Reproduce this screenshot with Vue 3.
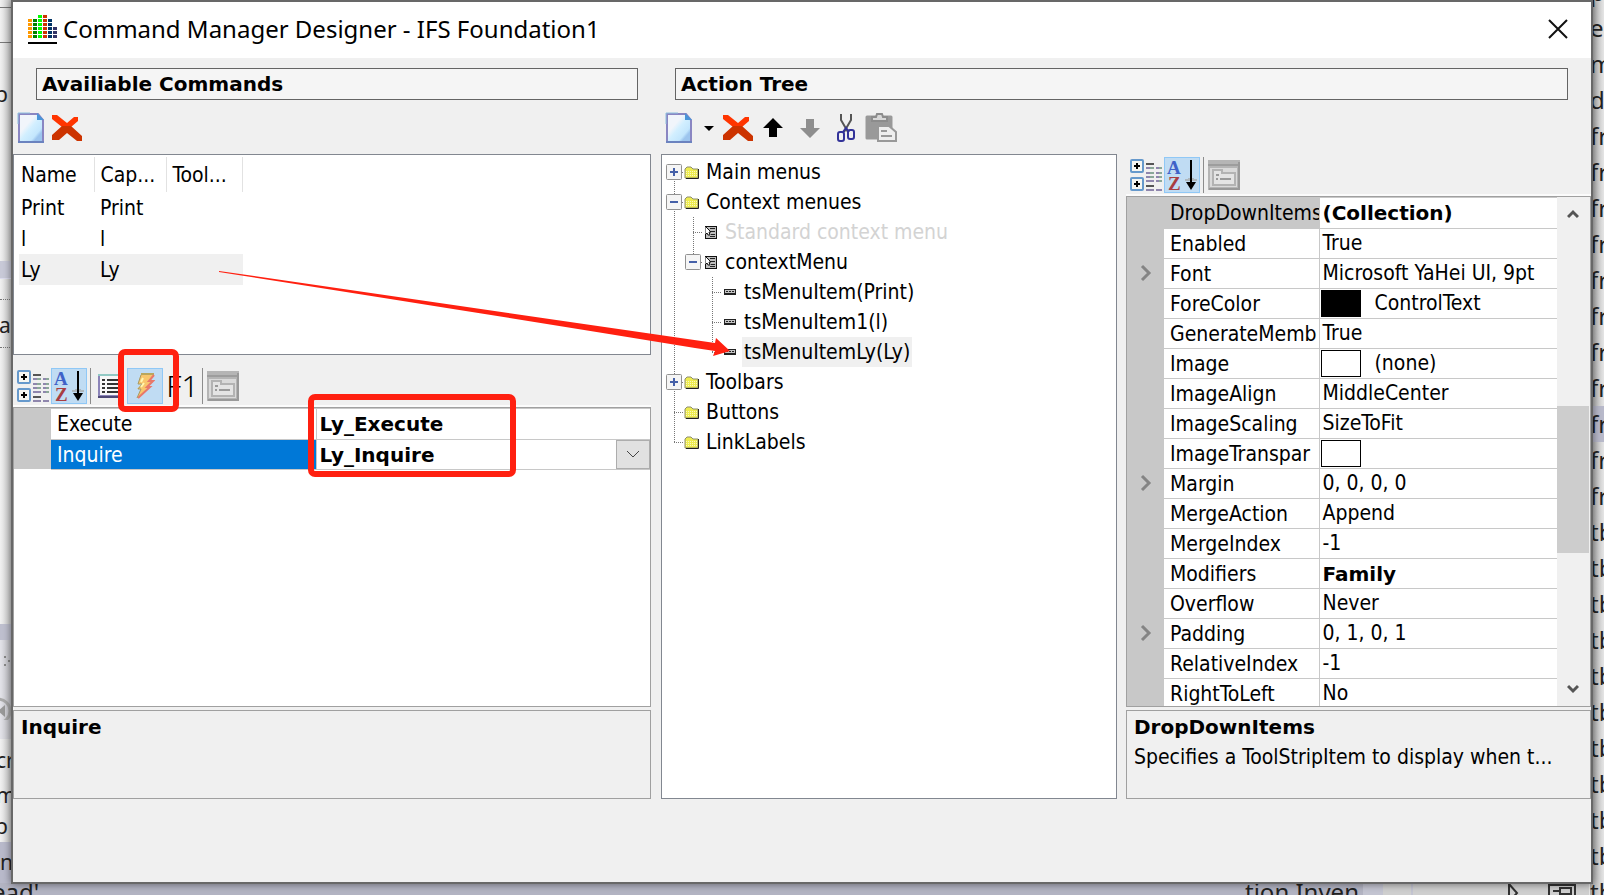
<script setup>
const bars = [
  { n: 5, c: '#ff9900' },
  { n: 5, c: '#008000' },
  { n: 6, c: '#00ff00' },
  { n: 6, c: '#cc3300' },
  { n: 5, c: '#003366' },
  { n: 3, c: '#333366' },
]
const commands = [
  { name: 'Print', caption: 'Print' },
  { name: 'l', caption: 'l' },
  { name: 'Ly', caption: 'Ly', selected: true },
]
const events = [
  { name: 'Execute', value: 'Ly_Execute' },
  { name: 'Inquire', value: 'Ly_Inquire', selected: true },
]
const tree = [
  { guides: ['plus first'], icon: 'folder', label: 'Main menus' },
  { guides: ['minus'], icon: 'folder', label: 'Context menues' },
  { guides: ['line', 'tee'], icon: 'menu', label: 'Standard context menu', dim: true },
  { guides: ['line', 'minus last'], icon: 'menu', label: 'contextMenu' },
  { guides: ['line', 'none', 'tee'], icon: 'item', label: 'tsMenuItem(Print)' },
  { guides: ['line', 'none', 'tee'], icon: 'item', label: 'tsMenuItem1(l)' },
  { guides: ['line', 'none', 'end'], icon: 'item', label: 'tsMenuItemLy(Ly)', selected: true },
  { guides: ['plus'], icon: 'folder', label: 'Toolbars' },
  { guides: ['tee'], icon: 'folder', label: 'Buttons' },
  { guides: ['end'], icon: 'folder', label: 'LinkLabels' },
]
const props = [
  { name: 'DropDownItems', value: '(Collection)', bold: true, selected: true },
  { name: 'Enabled', value: 'True' },
  { name: 'Font', value: 'Microsoft YaHei UI, 9pt', expand: true },
  { name: 'ForeColor', value: 'ControlText', swatch: 'black' },
  { name: 'GenerateMemb', value: 'True' },
  { name: 'Image', value: '(none)', swatch: 'white' },
  { name: 'ImageAlign', value: 'MiddleCenter' },
  { name: 'ImageScaling', value: 'SizeToFit' },
  { name: 'ImageTranspar', value: '', swatch: 'white' },
  { name: 'Margin', value: '0, 0, 0, 0', expand: true },
  { name: 'MergeAction', value: 'Append' },
  { name: 'MergeIndex', value: '-1' },
  { name: 'Modifiers', value: 'Family', bold: true },
  { name: 'Overflow', value: 'Never' },
  { name: 'Padding', value: '0, 1, 0, 1', expand: true },
  { name: 'RelativeIndex', value: '-1' },
  { name: 'RightToLeft', value: 'No' },
]
const fileRows = ['p', 'e', 'm', 'd', ...Array(11).fill('fr'), ...Array(11).fill('tb')]
const hasTop = (g) => !g.includes('first') && g !== 'none'
const hasBottom = (g) => !g.includes('last') && g !== 'none' && g !== 'end'
const hasBranch = (g) => g !== 'line' && g !== 'none'
</script>

<template>
  <div class="desktop">
    <svg class="symbols" aria-hidden="true">
      <linearGradient id="paper" x1="0" y1="0" x2="1" y2="1">
        <stop offset="0.35" stop-color="#f1f5fb" />
        <stop offset="0.5" stop-color="#d2efff" />
        <stop offset="0.72" stop-color="#c3e6fd" />
        <stop offset="0.8" stop-color="#9dc5ee" />
      </linearGradient>
      <symbol id="i-new" viewBox="0 0 28 32">
        <path d="M2 2h19l5 6v22H2z" fill="url(#paper)" stroke="#8a86c2" stroke-width="2" />
        <path d="M1 12V1h12" fill="none" stroke="#8fc0df" stroke-width="1" />
        <path d="M20 1l7 7h-7z" fill="#4a94d8" />
        <path d="M1 30h26" stroke="#6b83bf" stroke-width="2" />
      </symbol>
      <symbol id="i-delete" viewBox="0 0 32 30">
        <path d="M1 2h5l10 8 7-6h4v4l-7 6h-9L1 6z" fill="#ff3500" />
        <path d="M11 13h9l11 10v5h-5l-10-8-8 7H1v-5z" fill="#cc3300" />
      </symbol>
      <symbol id="i-up" viewBox="0 0 20 20">
        <path d="M10 0l10 10h-6v9H6v-9H0z" />
      </symbol>
      <symbol id="i-cat" viewBox="0 0 32 32">
        <g v-for="y in [0, 18]" :key="y">
          <rect x="1" :y="y + 1" width="12" height="12" rx="1" fill="#f6f6f2" stroke="#6699cc" stroke-width="2" />
          <path :d="`M4 ${y + 7}h6M7 ${y + 4}v6`" stroke="#000" stroke-width="2" />
        </g>
        <path d="M16 5h8M16 27h8" stroke="#555" stroke-width="2" />
        <path d="M16 9h8M16 14h8M16 18h8M16 22h8M26 9h6M26 14h6M26 18h6M26 22h6M16 31h8M26 31h6" stroke="#8f86ad" stroke-width="2" />
        <path d="M20 9h4M20 14h4M20 18h4M29 9h3M29 14h3M29 18h3M29 22h3" stroke="#8aa898" stroke-width="2" />
      </symbol>
      <symbol id="i-az" viewBox="0 0 34 34">
        <text x="2" y="16" class="az-a">A</text>
        <text x="3" y="32" class="az-z">Z</text>
        <path d="M26 2v27" stroke="#000" stroke-width="2" />
        <path d="M20 22h4v-2M32 22h-4v-2" stroke="#aeb7bd" stroke-width="2" fill="none" />
        <path d="M21 24h10l-5 8z" fill="#000" />
      </symbol>
      <symbol id="i-page" viewBox="0 0 32 30">
        <path d="M0 0h32v30H0z" fill="#b5b5b5" />
        <path d="M0 5h32" stroke="#9d9d9d" stroke-width="2" />
        <path d="M2 8h27v19H2z" fill="#dadada" />
        <path d="M5 12V10h9v3h13v12H5z" fill="#e4e4e4" stroke="#b3b3b3" stroke-width="2" />
        <path d="M8 15h3M8 19h2M12 19h11" stroke="#9a9a9a" stroke-width="2" />
        <path d="M1 29h30V2" fill="none" stroke="#999" stroke-width="2" />
      </symbol>
      <symbol id="i-folder" viewBox="0 0 16 13">
        <path d="M1 3l2-2h4l2 2h5v9H1z" fill="#eeec50" stroke="#8d8d6e" />
        <path d="M2 5.500h11M2 7.500h11M2 9.500h11" stroke="#fbfac0" stroke-dasharray="1 1" />
        <path d="M14.500 3v9.500H2" fill="none" stroke="#222" stroke-width="1" />
      </symbol>
      <symbol id="i-menu" viewBox="0 0 12 13">
        <path d="M0 0h12v13H0z" fill="#111" />
        <path d="M1 1h10v11H1z" fill="#bdbdbd" />
        <path d="M5 2.500h5M6 5.500h4M6 8.500h4M5 10.500h5" stroke="#222" />
        <path d="M0 0l6 6H4l1 3H3L2 7 0 9z" fill="#fff" stroke="#111" stroke-width="1" />
      </symbol>
      <symbol id="i-item" viewBox="0 0 12 6">
        <path d="M0 0h12v6H0z" fill="#222" />
        <path d="M1 1h10v3H1z" fill="#c4c4c4" />
        <path d="M2 2.500h8" stroke="#222" stroke-dasharray="2 1" />
      </symbol>
      <symbol id="i-chevron" viewBox="0 0 12 18">
        <path d="M2 2l7 7-7 7" fill="none" stroke="#848484" stroke-width="3" />
      </symbol>
    </svg>

    <div class="backdrop" aria-hidden="true">
      <div class="editor-left">
        <div class="strip s1"></div>
        <div class="strip s2"></div>
        <div class="strip s3">p</div>
        <div class="strip s4"></div>
        <div class="strip s5"></div>
        <div class="strip s6"></div>
        <div class="strip s7">ar</div>
        <div class="strip s8"></div>
        <div class="strip s9"></div>
        <div class="strip s10">
          <svg width="14" height="80" viewBox="0 0 14 80">
            <path d="M4 16h2v2H4zM4 24h2v2H4zM8 20h2v2H8zM12 16h2v2h-2zM12 24h2v2h-2z" fill="#888" />
            <circle cx="-2" cy="71" r="12" fill="none" stroke="#aaa" stroke-width="3" />
            <path d="M-2 71l7-6v12z" fill="#999" />
          </svg>
        </div>
        <div class="strip s11">cr</div>
        <div class="strip s12">m</div>
        <div class="strip s13">p</div>
        <div class="strip s14">n</div>
      </div>
      <div class="editor-right">
        <div v-for="(t, i) in fileRows" :key="i" class="file" :class="{ on: i === 12 }">{{ t }}</div>
      </div>
      <div class="editor-bottom">
        <span class="code">ead'</span>
        <span class="code tail">tion Inven</span>
        <span class="ruler"></span>
        <span class="outline">
          <svg width="12" height="20" viewBox="0 0 12 20"><path d="M2 1l8 9-8 9z" fill="none" stroke="#333" stroke-width="2" /></svg>
          <svg width="28" height="20" viewBox="0 0 28 20"><path d="M1 20V2h26v18M5 8h6M12 5h11v6H12zM5 15h18" fill="none" stroke="#333" stroke-width="2" /></svg>
        </span>
      </div>
    </div>

    <section class="dialog" role="dialog" aria-labelledby="dlg-title">
      <header class="titlebar">
        <svg class="logo" width="29" height="29" viewBox="0 0 29 29">
          <template v-for="(b, i) in bars" :key="i">
            <rect v-for="k in b.n" :key="k" :x="i * 5" :y="24 - k * 4" width="4" height="3" :fill="b.c" />
          </template>
          <path d="M0 28h29" stroke="#000" stroke-width="2" />
        </svg>
        <h1 id="dlg-title">Command Manager Designer - IFS Foundation1</h1>
        <button class="close" type="button" aria-label="Close">
          <svg width="20" height="20" viewBox="0 0 20 20"><path d="M1 1l18 18M19 1L1 19" stroke="#111" stroke-width="2" /></svg>
        </button>
      </header>

      <main class="body">
        <div class="col-left">
          <h2 class="head">Availiable Commands</h2>
          <div class="tools" role="toolbar">
            <button type="button" aria-label="New command"><svg width="28" height="32"><use href="#i-new" /></svg></button>
            <button type="button" aria-label="Delete command"><svg width="32" height="30"><use href="#i-delete" /></svg></button>
          </div>

          <div class="list">
            <table>
              <thead>
                <tr><th class="c1">Name</th><th class="c2">Cap...</th><th class="c3">Tool...</th></tr>
              </thead>
              <tbody>
                <tr v-for="c in commands" :key="c.name" :class="{ sel: c.selected }">
                  <td>{{ c.name }}</td><td>{{ c.caption }}</td><td></td>
                </tr>
              </tbody>
            </table>
          </div>

          <div class="ptools events" role="toolbar">
            <button type="button" aria-label="Categorized"><svg width="32" height="32"><use href="#i-cat" /></svg></button>
            <button type="button" class="on" aria-label="Alphabetical"><svg width="34" height="34"><use href="#i-az" /></svg></button>
            <i class="sep"></i>
            <button type="button" class="props-btn" aria-label="Properties">
              <svg width="26" height="24" viewBox="0 0 26 24">
                <path d="M1 1h24v21H1z" fill="#f7f7f7" stroke="#8b84b8" stroke-width="2" />
                <path d="M0 1h25" stroke="#92c9c4" stroke-width="2" />
                <path d="M0 23h26" stroke="#4d4877" stroke-width="2" />
                <path d="M4 6h3M4 10h3M4 14h3M4 18h3M9 6h13M9 10h13M9 14h13M9 18h13" stroke="#333" stroke-width="2" />
              </svg>
            </button>
            <button type="button" class="on bolt" aria-label="Events">
              <svg width="20" height="26" viewBox="0 0 20 26">
                <path d="M6 1h13l-5 7h4l-6 6h3L2 25l4-9H2l5-5H3z" fill="#f8c66c" />
                <path d="M6 1h13" stroke="#b9a65c" stroke-width="2" />
                <path d="M19 2l-5 6h4l-6 6h3L3 25" fill="none" stroke="#e8786a" stroke-width="2" />
                <path d="M6 2L3 11h4l-4 5h3L2 25" fill="none" stroke="#a89a62" stroke-width="1" />
                <path d="M8 5l-2 4M9 10l-3 4" stroke="#fff6b0" stroke-width="2" />
              </svg>
              <span class="mark"></span>
            </button>
            <button type="button" class="f1">F1</button>
            <i class="sep"></i>
            <button type="button" class="pages" aria-label="Property pages"><svg width="32" height="30"><use href="#i-page" /></svg></button>
          </div>

          <div class="pgrid">
            <div class="pscroll">
              <table>
                <colgroup><col class="g" /><col class="ne" /><col /></colgroup>
                <tbody>
                  <tr v-for="e in events" :key="e.name" :class="{ chosen: e.selected }">
                    <td class="gut"></td>
                    <th scope="row">{{ e.name }}</th>
                    <td class="val">
                      <div class="cell">
                        <span class="bold">{{ e.value }}</span>
                        <button v-if="e.selected" type="button" class="drop" aria-label="Choose handler">
                          <svg width="14" height="8" viewBox="0 0 14 8"><path d="M1 1l6 6 6-6" fill="none" stroke="#444" /></svg>
                        </button>
                      </div>
                    </td>
                  </tr>
                </tbody>
              </table>
            </div>
            <span class="mark values"></span>
          </div>
          <div class="desc"><strong class="bold">Inquire</strong></div>
        </div>

        <div class="col-right">
          <h2 class="head">Action Tree</h2>
          <div class="tools" role="toolbar">
            <button type="button" aria-label="New item"><svg width="28" height="32"><use href="#i-new" /></svg></button>
            <button type="button" class="more" aria-label="More"><svg width="10" height="5" viewBox="0 0 10 5"><path d="M0 0h10L5 5z" /></svg></button>
            <button type="button" aria-label="Delete item"><svg width="32" height="30"><use href="#i-delete" /></svg></button>
            <button type="button" class="up" aria-label="Move up"><svg width="20" height="20"><use href="#i-up" /></svg></button>
            <button type="button" class="down" aria-label="Move down"><svg width="20" height="20"><use href="#i-up" /></svg></button>
            <button type="button" class="cut" aria-label="Cut">
              <svg width="20" height="30" viewBox="0 0 20 30">
                <path d="M5 1v6l7 12M15 1v6L8 19" fill="none" stroke="#555" stroke-width="2" />
                <path d="M7 19l3-4 3 4" fill="none" stroke="#333399" stroke-width="2" />
                <rect x="2" y="19" width="6" height="9" rx="2" fill="none" stroke="#333399" stroke-width="2" />
                <rect x="12" y="17" width="6" height="9" rx="2" fill="none" stroke="#333399" stroke-width="2" />
              </svg>
            </button>
            <button type="button" aria-label="Paste">
              <svg width="32" height="30" viewBox="0 0 32 30">
                <path d="M2 4h24v21H2z" fill="#999" stroke="#999" stroke-width="3" stroke-linejoin="round" />
                <path d="M7 8V4h4l1-3h5l1 3h4v4z" fill="#d8d8d8" stroke="#8c8c8c" stroke-width="2" />
                <path d="M13 13h11l7 6v9H13z" fill="#eee" stroke="#999" stroke-width="2" />
                <path d="M16 18h6M16 23h11" stroke="#999" stroke-width="2" />
              </svg>
            </button>
          </div>

          <div class="panes">
            <ul class="tree" role="tree">
              <li v-for="n in tree" :key="n.label" role="treeitem" :class="{ dim: n.dim, sel: n.selected }">
                <svg v-for="(g, i) in n.guides" :key="i" class="guide" width="19" height="30" viewBox="0 0 19 30">
                  <g stroke="#777" stroke-dasharray="1 1">
                    <path v-if="hasTop(g)" d="M9.500 0V15" />
                    <path v-if="hasBottom(g)" d="M9.500 16V30" />
                    <path v-if="hasBranch(g)" d="M9 15.500H19" />
                  </g>
                  <g v-if="g.includes('plus') || g.includes('minus')">
                    <rect x="1.500" y="7.500" width="15" height="15" rx="1" fill="#f5f5f5" stroke="#919191" />
                    <path d="M5 15h8" stroke="#4560a8" stroke-width="2" />
                    <path v-if="g.includes('plus')" d="M9 11v8" stroke="#4560a8" stroke-width="2" />
                  </g>
                </svg>
                <span class="nicon" :class="n.icon">
                  <svg v-if="n.icon === 'folder'" width="16" height="13"><use href="#i-folder" /></svg>
                  <svg v-else-if="n.icon === 'menu'" width="12" height="13"><use href="#i-menu" /></svg>
                  <svg v-else width="12" height="6"><use href="#i-item" /></svg>
                </span>
                <span class="label">{{ n.label }}</span>
              </li>
            </ul>

            <div class="props">
              <div class="ptools" role="toolbar">
                <button type="button" aria-label="Categorized"><svg width="32" height="32"><use href="#i-cat" /></svg></button>
                <button type="button" class="on" aria-label="Alphabetical"><svg width="34" height="34"><use href="#i-az" /></svg></button>
                <i class="sep"></i>
                <button type="button" class="pages" aria-label="Property pages"><svg width="32" height="30"><use href="#i-page" /></svg></button>
              </div>
              <div class="pgrid">
                <div class="pscroll">
                  <table>
                    <colgroup><col class="g" /><col class="np" /><col /></colgroup>
                    <tbody>
                      <tr v-for="p in props" :key="p.name" :class="{ current: p.selected }">
                        <td class="gut"><svg v-if="p.expand" width="12" height="18"><use href="#i-chevron" /></svg></td>
                        <th scope="row">{{ p.name }}</th>
                        <td class="val" :class="{ sw: p.swatch }">
                          <div class="cell"><i v-if="p.swatch" class="swatch" :class="p.swatch"></i><span :class="{ bold: p.bold }">{{ p.value }}</span></div>
                        </td>
                      </tr>
                    </tbody>
                  </table>
                </div>
                <div class="scrollbar">
                  <button type="button" aria-label="Scroll up"><svg width="12" height="10" viewBox="0 0 12 10"><path d="M1 8l5-5 5 5" fill="none" stroke="#555" stroke-width="3" /></svg></button>
                  <span class="space above"></span>
                  <span class="thumb"></span>
                  <span class="space below"></span>
                  <button type="button" aria-label="Scroll down"><svg width="12" height="10" viewBox="0 0 12 10"><path d="M1 2l5 5 5-5" fill="none" stroke="#555" stroke-width="3" /></svg></button>
                </div>
              </div>
              <div class="desc"><strong class="bold">DropDownItems</strong><p>Specifies a ToolStripItem to display when t...</p></div>
            </div>
          </div>
        </div>
      </main>
    </section>

    <svg class="arrow" width="520" height="90" viewBox="0 0 520 90" aria-hidden="true">
      <path d="M1 0L497 72l1-5 14 13-17 5 2-5-20-3Q250 40 1 1z" fill="#ff2010" />
    </svg>
  </div>
</template>

<style>
body { margin: 0; }
.az-a { font: bold 19px "Liberation Serif", serif; fill: #3f62c8; }
.az-z { font: bold 19px "Liberation Serif", serif; fill: #a83d42; }
</style>

<style scoped>
.desktop, .desktop * { box-sizing: border-box; }
.desktop {
  position: relative;
  height: 100vh;
  min-height: 700px;
  padding: 0 11px 11px;
  overflow: hidden;
  background: #e6e6e6;
  color: #000;
  font: 21px/30px "DejaVu Sans Condensed", "DejaVu Sans", sans-serif;
}
.symbols { position: absolute; width: 0; height: 0; }
svg { display: block; flex: none; }
button { display: flex; align-items: center; justify-content: center; padding: 0; border: 0; background: none; font: inherit; color: inherit; }
h1, h2, p, ul { margin: 0; padding: 0; font-weight: normal; }

.backdrop { position: absolute; inset: 0; color: #222; font: 24px/36px "Noto Sans", sans-serif; overflow: hidden; }
.editor-left { position: absolute; left: 0; top: 0; bottom: 0; width: 16px; display: flex; flex-direction: column; background: linear-gradient(90deg, #f2f2f2, #b8b8b8); }
.strip { flex: none; width: 16px; height: 35px; overflow: hidden; white-space: nowrap; }
.s1 { height: 8px; border-bottom: 1px solid #777; }
.s2 { border-bottom: 1px solid #777; }
.s3 { height: 209px; padding-top: 33px; }
.strip.s3, .strip.s13 { text-indent: -5px; font-size: 21px; }
.s4 { height: 9px; }
.s5 { height: 17px; background: #c9cad8; }
.s6 { height: 22px; border-top: 1px solid #dde; border-bottom: 1px dotted #777; }
.s7 { height: 48px; text-indent: -1px; line-height: 50px; border-bottom: 1px dotted #777; font-size: 21px; }
.s8 { height: 276px; }
.s9 { height: 16px; background: #bfc0cf; }
.s10 { height: 99px; background: linear-gradient(90deg, #e4e4ea, #adadb2); }
.s11 { height: 40px; text-indent: -4px; line-height: 42px; font-size: 21px; }
.s12 { height: 32px; line-height: 32px; font-size: 21px; text-indent: -4px; }
.s13 { height: 31px; line-height: 31px; }
.s14 { height: 60px; background: #b9bacb; line-height: 40px; font-size: 21px; }
.editor-right { position: absolute; right: 0; top: -26px; width: 14px; background: linear-gradient(90deg, #aaa, #e6e6e6); }
.file { height: 36px; white-space: nowrap; }
.file.on { background: #b9bacb; }
.editor-bottom { position: absolute; left: 0; right: 15px; bottom: 0; height: 12px; display: flex; align-items: flex-start; background: #b3b4c3; overflow: hidden; line-height: 18px; }
.editor-bottom .code { flex: none; margin-left: -8px; }
.editor-bottom .tail { margin-left: auto; padding-right: 4px; background: #b3b4c3; }
.ruler { width: 50px; height: 12px; border: solid #c4c5d2; border-width: 0 2px 0 20px; background: #d0d0d0; }
.outline { display: flex; justify-content: flex-end; gap: 29px; width: 176px; height: 12px; padding-right: 13px; background: #d0d0d0; }

.dialog {
  position: relative;
  display: flex;
  flex-direction: column;
  height: 100%;
  border: 2px solid #686868;
  background: #f0f0f0;
  box-shadow: 0 0 8px rgba(0, 0, 0, 0.5);
}
.titlebar { display: flex; align-items: center; flex: none; height: 56px; padding: 0 23px 2px 15px; background: #fff; }
.titlebar h1 { margin-left: 6px; font: 24px/36px "Noto Sans", sans-serif; }
.close { width: 20px; height: 20px; margin-left: auto; }

.body { flex: 1; min-height: 0; display: grid; grid-template-columns: 638fr 940fr; padding: 10px 0 83px; }
.col-left, .col-right { display: flex; flex-direction: column; min-width: 0; min-height: 0; }
.bold, .head { font: bold 20px/30px "DejaVu Sans", sans-serif; }
.head { flex: none; height: 32px; margin: 0 13px 0 23px; padding-left: 5px; border: 1px solid #646464; background: #f5f5f5; }
.col-right .head { margin: 0 23px 0 24px; }
.tools { flex: none; display: flex; align-items: center; height: 54px; padding: 4px 4px 2px; gap: 6px; }
.col-right .tools { padding-left: 14px; gap: 9px; }
.more { width: 14px; margin-right: -3px; }
.up { width: 20px; color: #000; }
.down { width: 20px; margin: 0 7px 0 8px; }
.down svg { fill: #8e8e8e; transform: rotate(180deg); }

.list { flex: none; height: 201px; border: 1px solid #828790; background: #fff; }
.list table { width: 224px; margin: 2px 0 0 5px; border-collapse: collapse; table-layout: fixed; }
.list th { height: 35px; padding: 0 0 0 6px; border-right: 1px solid #e2e2e2; text-align: left; font-weight: normal; }
.list td { height: 31px; padding: 0 0 0 6px; }
.list .c1 { width: 75px; }
.list .c2 { width: 72px; }
.list th:first-child, .list td:first-child { padding-left: 2px; }
.sel td { background: #f0f0f0; }

.ptools { flex: none; display: flex; align-items: center; height: 42px; padding: 1px 4px 0; gap: 2px; border-bottom: 2px solid #fbfbfb; }
.ptools.events { height: 52px; padding-top: 11px; }
.ptools button { flex: none; height: 36px; }
.ptools .on { position: relative; width: 36px; border: 1px solid #90c8f6; background: #c0dcf3; }
.sep { width: 1px; height: 36px; margin: 0 3px 0 1px; background: #8c8c8c; }
.ptools .pages { margin-left: -1px; }
.props-btn { width: 28px; margin-left: 1px; }
.f1 { width: 33px; margin-left: 1px; font: 30px/36px "Noto Sans", sans-serif; font-weight: 300; }
.mark { position: absolute; inset: -20px -17px -9px -10px; border: 6px solid #ff2010; border-radius: 7px; z-index: 2; }

.pgrid { position: relative; flex: 1; min-height: 0; display: flex; border: 1px solid #a0a0a0; background: #fff; }
.pscroll { flex: 1; min-width: 0; overflow: hidden; border-top: 1px solid #c8c8c8; }
.pgrid table { width: 100%; border-collapse: collapse; table-layout: fixed; }
.g { width: 37px; }
.ne { width: 265px; }
.np { width: 155px; }
.pgrid th, .pgrid td { height: 30px; padding: 0; line-height: 29px; }
.pgrid th { padding: 1px 0 0 6px; border: solid #c8c8c8; border-width: 0 1px 1px 0; font-weight: normal; line-height: 28px; text-align: left; white-space: nowrap; overflow: hidden; }
.pgrid .val { padding-left: 3px; border-bottom: 1px solid #c8c8c8; }
.pgrid .gut { background: #c8c8c8; padding-left: 13px; }
.pgrid .sw { padding-left: 1px; }
.cell { display: flex; align-items: center; height: 29px; white-space: nowrap; }
.cell span { padding-top: 1px; }
.chosen th { background: #0078d7; color: #fff; }
.current th { background: #c8c8c8; }
.drop { width: 34px; height: 29px; margin-left: auto; border: 1px solid #adadad; background: #e1e1e1; }
.values.mark { inset: -14px auto auto 294px; width: 208px; height: 83px; }
.swatch { flex: none; width: 40px; height: 27px; margin-right: 14px; border: 1px solid #000; }
.swatch.black { background: #000; }
.scrollbar { display: flex; flex-direction: column; width: 33px; padding-right: 1px; background: #f0f0f0; }
.scrollbar button { height: 34px; }
.space.above { flex: 175; }
.thumb { flex: 147; background: #cdcdcd; }
.space.below { flex: 119; }
.desc { flex: none; height: 89px; margin-top: 3px; padding: 1px 7px; border: 1px solid #a0a0a0; overflow: hidden; }
.desc strong { display: block; }
.desc p { overflow: hidden; white-space: nowrap; text-overflow: ellipsis; }

.panes { flex: 1; min-height: 0; display: grid; grid-template-columns: 456fr 465fr; gap: 9px; padding-left: 10px; }
.tree { min-width: 0; padding: 2px 0 0 3px; border: 1px solid #828790; background: #fff; list-style: none; overflow: hidden; }
.tree li { display: flex; align-items: center; height: 30px; white-space: nowrap; }
.nicon { flex: none; width: 20px; }
.nicon.menu, .nicon.item { padding-left: 2px; }
.label { padding: 0 2px; }
.tree .sel .label { background: #f0f0f0; }
.dim { color: #d3d3d3; }
.props { display: flex; flex-direction: column; min-width: 0; min-height: 0; }

.arrow { position: absolute; left: 218px; top: 271px; pointer-events: none; }
</style>
